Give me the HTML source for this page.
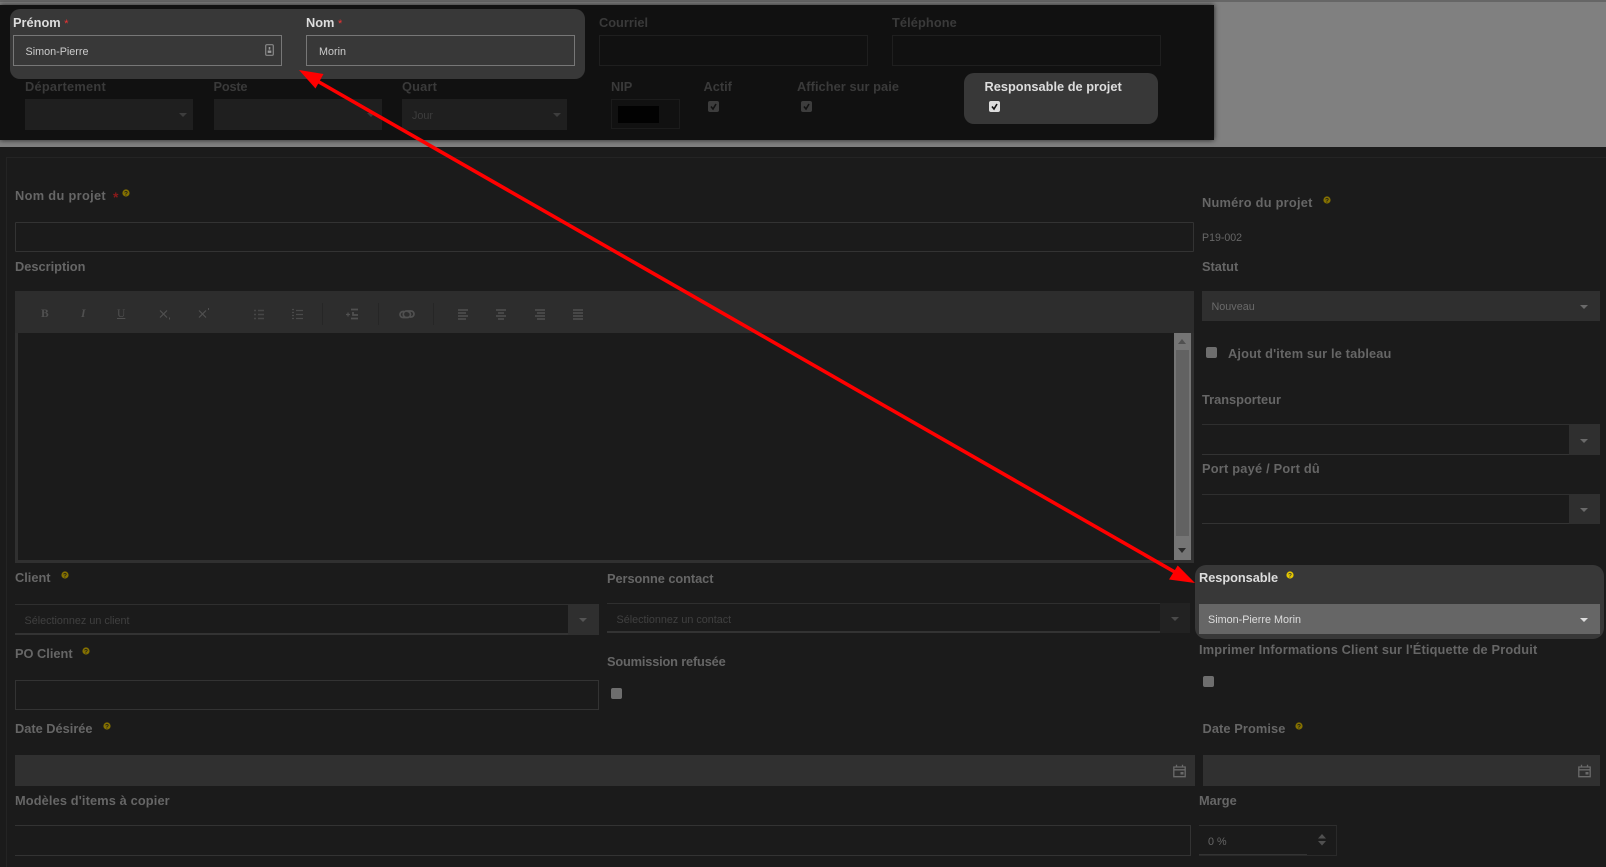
<!DOCTYPE html>
<html lang="fr"><head><meta charset="utf-8"><title>Projet</title>
<style>
html,body{margin:0;padding:0;background:#1b1b1b}
#p{position:relative;width:1606px;height:867px;overflow:hidden;background:#1b1b1b;font-family:"Liberation Sans",sans-serif;filter:blur(.3px)}
#p div,#p span.a{position:absolute;box-sizing:border-box}
.l{font-weight:bold;font-size:12.8px;line-height:16px;color:#666;white-space:nowrap;margin-top:1px}
.z{margin-top:0}
.d{color:#3a3a3a}.w{color:#ddd}
.t{font-size:10.8px;line-height:14px;white-space:nowrap;margin-top:1px}
.b{border:1px solid #333}
.s{background:#2f2f2f}
.c{width:11px;height:11px;border-radius:2px;background:#6e6e6e}
.c svg{position:absolute;left:0;top:0}
svg{position:absolute;overflow:visible}
</style></head><body><div id="p">

<div style="left:0;top:0;width:1606px;height:147px;background:#808080"></div>
<div style="left:0;top:0;width:1606px;height:2px;background:#666"></div>
<div style="left:0;top:5px;width:1214px;height:135px;background:#111;box-shadow:0 0 5px #222"></div>

<div style="left:10px;top:9px;width:575px;height:70px;border-radius:10px;background:#383838"></div>
<div class="l w" style="left:13px;top:14px">Prénom <span style="color:#e33;font-weight:normal;font-size:11px">*</span></div>
<div class="l w" style="left:306px;top:14px">Nom <span style="color:#e33;font-weight:normal;font-size:11px">*</span></div>
<div style="left:13px;top:35px;width:269px;height:31px;border:1px solid #777"></div>
<div style="left:306px;top:35px;width:269px;height:31px;border:1px solid #777"></div>
<div class="t" style="left:25.5px;top:44px;color:#ccc">Simon-Pierre</div>
<div class="t" style="left:319px;top:44px;color:#ccc">Morin</div>
<svg style="left:265px;top:44px" width="9" height="12"><rect x=".7" y=".7" width="7.6" height="10.6" rx="1.2" fill="none" stroke="#888" stroke-width="1.2"/><rect x="3.7" y="3" width="1.6" height="2.6" fill="#999"/><rect x="2.7" y="6.5" width="3.6" height="2.4" fill="#999"/></svg>

<div class="l d" style="left:599px;top:14px">Courriel</div>
<div class="l d" style="left:892px;top:14px;letter-spacing:.1px">Téléphone</div>
<div style="left:599px;top:35px;width:269px;height:31px;border:1px solid #1f1f1f"></div>
<div style="left:892px;top:35px;width:269px;height:31px;border:1px solid #1f1f1f"></div>

<div class="l d" style="left:25px;top:78px;letter-spacing:.25px">Département</div>
<div class="l d" style="left:213.5px;top:78px;letter-spacing:-.2px">Poste</div>
<div class="l d" style="left:402px;top:78px;letter-spacing:.2px">Quart</div>
<div style="left:25px;top:99px;width:168px;height:31px;background:#1f1f1f"></div>
<div style="left:213.5px;top:99px;width:168px;height:31px;background:#1f1f1f"></div>
<div style="left:402px;top:99px;width:164.5px;height:31px;background:#1f1f1f"></div>
<div class="t" style="left:412px;top:108px;color:#3d3d3d">Jour</div>
<svg style="left:179px;top:113px" width="9" height="5"><path d="M0 0h8l-4 4z" fill="#3d3d3d"/></svg>
<svg style="left:367px;top:113px" width="9" height="5"><path d="M0 0h8l-4 4z" fill="#3d3d3d"/></svg>
<svg style="left:553px;top:113px" width="9" height="5"><path d="M0 0h8l-4 4z" fill="#3d3d3d"/></svg>

<div class="l d" style="left:611px;top:78px">NIP</div>
<div style="left:611px;top:99px;width:69px;height:30px;border:1px solid #1c1c1c"></div>
<div style="left:618px;top:106px;width:41px;height:17px;background:#020202"></div>
<div class="l d" style="left:703.5px;top:78px">Actif</div>
<div class="l d" style="left:797px;top:78px;letter-spacing:.06px">Afficher sur paie</div>
<div class="c" style="left:708px;top:101px;background:#3d3d3d"><svg width="11" height="11"><path d="M3 5.5l2 2.5 3-5" fill="none" stroke="#111" stroke-width="1.6"/></svg></div>
<div class="c" style="left:801px;top:101px;background:#3d3d3d"><svg width="11" height="11"><path d="M3 5.5l2 2.5 3-5" fill="none" stroke="#111" stroke-width="1.6"/></svg></div>

<div style="left:964px;top:73px;width:194px;height:51px;border-radius:10px;background:#383838"></div>
<div class="l w" style="left:984.5px;top:78px">Responsable de projet</div>
<div class="c" style="left:989px;top:101px;background:#ddd"><svg width="11" height="11"><path d="M3 5.5l2 2.5 3-5" fill="none" stroke="#111" stroke-width="1.6"/></svg></div>

<div style="left:6px;top:157px;width:1600px;height:710px;border:1px solid #242424;border-right:0;border-bottom:0"></div>

<div class="l" style="left:15px;top:187px;letter-spacing:.33px">Nom du projet</div>
<div style="left:113px;top:190px;color:#8a1a1a;font-size:14px;line-height:14px;font-weight:bold">*</div>
<svg style="left:121.5px;top:189px" width="8" height="8"><circle cx="4" cy="4" r="3.6" fill="#857100"/><text x="4" y="6.4" font-size="6.5" font-weight="bold" text-anchor="middle" fill="#1b1b1b" font-family="Liberation Sans">?</text></svg>
<div class="b" style="left:15px;top:222px;width:1179px;height:30px;border-radius:1px"></div>

<div class="l z" style="left:15px;top:259px">Description</div>

<div class="l" style="left:1202px;top:194px;letter-spacing:.25px">Numéro du projet</div>
<svg style="left:1323px;top:196px" width="8" height="8"><circle cx="4" cy="4" r="3.6" fill="#857100"/><text x="4" y="6.4" font-size="6.5" font-weight="bold" text-anchor="middle" fill="#1b1b1b" font-family="Liberation Sans">?</text></svg>
<div class="t" style="left:1202px;top:230px;color:#666;font-size:10.6px">P19-002</div>
<div class="l z" style="left:1202px;top:259px">Statut</div>

<!-- editor -->
<div style="left:15px;top:291px;width:1179px;height:42px;background:#2d2d2d"></div>
<div style="left:15px;top:333px;width:3px;height:230px;background:#303030"></div>
<div style="left:15px;top:560px;width:1179px;height:3px;background:#303030"></div>
<div style="left:1191px;top:333px;width:3px;height:230px;background:#303030"></div>
<div style="left:1174px;top:333px;width:17px;height:227px;background:#757575"></div>
<div style="left:1176px;top:350px;width:13px;height:186px;background:#626262"></div>
<svg style="left:1178px;top:339px" width="10" height="6"><path d="M0 5h8L4 0z" fill="#505050"/></svg>
<svg style="left:1178px;top:548px" width="10" height="6"><path d="M0 0h8L4 5z" fill="#2a2a2a"/></svg>

<!-- toolbar icons -->
<div style="left:41px;top:307px;font:bold 11.5px/14px 'Liberation Serif',serif;color:#505050">B</div>
<div style="left:81px;top:307px;font:italic bold 11.5px/14px 'Liberation Serif',serif;color:#505050">I</div>
<div style="left:117px;top:307px;font:11.5px/14px 'Liberation Serif',serif;color:#505050;text-decoration:underline">U</div>
<svg style="left:0;top:0" width="1606" height="867" stroke="#505050" fill="none">
<path d="M160 310.500l7 7m0-7l-7 7" stroke-width="1.200"/><path d="M169.500 317.500v2" stroke-width="1"/>
<path d="M199 310.500l7 7m0-7l-7 7" stroke-width="1.200"/><path d="M208.500 308v2" stroke-width="1"/>
<path d="M254 310.500h2m2 0h6M254 314.500h2m2 0h6M254 318.500h2m2 0h6" stroke="#464646" stroke-width="1.400"/>
<path d="M292 309.500h2m-2 3h2m-2 3h2m-2 3h2M296 310.500h7M296 314.500h7M296 318.500h7" stroke="#4a4a4a" stroke-width="1.200"/>
<path d="M322.500 303v22M378.500 303v22M433.500 303v22" stroke="#262626"/>
<path d="M346 314.500h4m-2-2v4" stroke-width="1.200"/><path d="M351 309.500h7M353 312v3h5M351 318.500h7" stroke-width="1.800"/>
<path d="M404 317.500h3.500a3 3 0 0 0 0-6M410 311h-3.500a3 3 0 0 0 0 6.500M410 311h1a3 3 0 0 1 0 6h-1M404 317.500h-1a3 3 0 0 1 0-6h1" stroke-width="1.700"/>
<path d="M458 310h10M458 313h8M458 316h10M458 319h8" stroke-width="1.600"/>
<path d="M496 310h10M498 313h6M496 316h10M498 319h6" stroke-width="1.600"/>
<path d="M535 310h10M537 313h8M535 316h10M537 319h8" stroke-width="1.600"/>
<path d="M573 310h10M573 313h10M573 316h10M573 319h10" stroke-width="1.600"/>
</svg>

<!-- Statut -->
<div class="s" style="left:1202px;top:291px;width:398px;height:30px"></div>
<div class="t" style="left:1211.500px;top:299px;color:#6a6a6a">Nouveau</div>
<svg style="left:1580px;top:305px" width="9" height="5"><path d="M0 0h8l-4 4z" fill="#6a6a6a"/></svg>
<div class="c" style="left:1206px;top:347px"></div>
<div class="l" style="left:1228px;top:345px;letter-spacing:.15px">Ajout d'item sur le tableau</div>

<div class="l" style="left:1202px;top:391px">Transporteur</div>
<div style="left:1202px;top:424px;width:398px;height:31px;border-top:1px solid #2f2f2f;border-bottom:1px solid #333"></div>
<div class="s" style="left:1569px;top:424px;width:31px;height:31px"></div>
<svg style="left:1580px;top:439px" width="9" height="5"><path d="M0 0h8l-4 4z" fill="#6a6a6a"/></svg>
<div class="l z" style="left:1202px;top:461px;letter-spacing:.22px">Port payé / Port dû</div>
<div style="left:1202px;top:494px;width:398px;height:30px;border-top:1px solid #2f2f2f;border-bottom:1px solid #333"></div>
<div class="s" style="left:1569px;top:494px;width:31px;height:30px"></div>
<svg style="left:1580px;top:508px" width="9" height="5"><path d="M0 0h8l-4 4z" fill="#6a6a6a"/></svg>

<!-- Responsable -->
<div style="left:1195px;top:565px;width:409px;height:74px;border-radius:11px;background:#383838"></div>
<div class="l w" style="left:1199px;top:569px;letter-spacing:-.05px">Responsable</div>
<svg style="left:1286px;top:571px" width="8" height="8"><circle cx="4" cy="4" r="3.6" fill="#e6c800"/><text x="4" y="6.4" font-size="6.5" font-weight="bold" text-anchor="middle" fill="#383838" font-family="Liberation Sans">?</text></svg>
<div style="left:1199px;top:604px;width:401px;height:30px;background:#666"></div>
<div class="t" style="left:1208px;top:612px;color:#ddd">Simon-Pierre Morin</div>
<svg style="left:1580px;top:618px" width="9" height="5"><path d="M0 0h8l-4 4z" fill="#ddd"/></svg>
<div class="l" style="left:1199px;top:641px;letter-spacing:.15px">Imprimer Informations Client sur l'Étiquette de Produit</div>
<div class="c" style="left:1203px;top:676px"></div>

<!-- Client -->
<div class="l" style="left:15px;top:569px">Client</div>
<svg style="left:60.500px;top:571px" width="8" height="8"><circle cx="4" cy="4" r="3.600" fill="#857100"/><text x="4" y="6.400" font-size="6.500" font-weight="bold" text-anchor="middle" fill="#1b1b1b" font-family="Liberation Sans">?</text></svg>
<div style="left:15px;top:604px;width:584px;height:31px;border-top:1px solid #2f2f2f;border-bottom:2px solid #333"></div>
<div class="s" style="left:568px;top:604px;width:31px;height:31px"></div>
<div class="t" style="left:24.500px;top:613px;color:#404040">Sélectionnez un client</div>
<svg style="left:579px;top:618px" width="9" height="5"><path d="M0 0h8l-4 4z" fill="#555"/></svg>

<div class="l" style="left:607px;top:570px;letter-spacing:-.06px">Personne contact</div>
<div style="left:607px;top:603px;width:583px;height:30px;border-top:1px solid #2f2f2f;border-bottom:2px solid #333"></div>
<div style="left:1160px;top:603px;width:30px;height:30px;background:#222"></div>
<div class="t" style="left:616.500px;top:612px;color:#404040">Sélectionnez un contact</div>
<svg style="left:1171px;top:617px" width="9" height="5"><path d="M0 0h8l-4 4z" fill="#4a4a4a"/></svg>

<div class="l" style="left:15px;top:645px">PO Client</div>
<svg style="left:82px;top:647px" width="8" height="8"><circle cx="4" cy="4" r="3.600" fill="#857100"/><text x="4" y="6.400" font-size="6.500" font-weight="bold" text-anchor="middle" fill="#1b1b1b" font-family="Liberation Sans">?</text></svg>
<div class="b" style="left:15px;top:680px;width:584px;height:30px"></div>
<div class="l" style="left:607px;top:653px;letter-spacing:-.17px">Soumission refusée</div>
<div class="c" style="left:611px;top:688px;height:10.500px;width:10.500px"></div>

<div class="l" style="left:15px;top:720px">Date Désirée</div>
<svg style="left:102.500px;top:722px" width="8" height="8"><circle cx="4" cy="4" r="3.600" fill="#857100"/><text x="4" y="6.400" font-size="6.500" font-weight="bold" text-anchor="middle" fill="#1b1b1b" font-family="Liberation Sans">?</text></svg>
<div style="left:15px;top:755px;width:1180px;height:31px;background:#303030"></div>
<svg style="left:1172.500px;top:764px" width="13" height="14"><path d="M.8 3h11.400v9.700H.8zM.8 5.800h11.400M3.500.8v2.500M9.500.8v2.500" fill="none" stroke="#6a6a6a" stroke-width="1.300"/><rect x="7.500" y="8" width="3" height="2.500" fill="#6a6a6a"/></svg>

<div class="l" style="left:1202.500px;top:720px;letter-spacing:.1px">Date Promise</div>
<svg style="left:1295px;top:722px" width="8" height="8"><circle cx="4" cy="4" r="3.600" fill="#857100"/><text x="4" y="6.400" font-size="6.500" font-weight="bold" text-anchor="middle" fill="#1b1b1b" font-family="Liberation Sans">?</text></svg>
<div style="left:1203px;top:755px;width:397px;height:31px;background:#303030"></div>
<svg style="left:1577.500px;top:764px" width="13" height="14"><path d="M.8 3h11.400v9.700H.8zM.8 5.800h11.400M3.500.8v2.500M9.500.8v2.500" fill="none" stroke="#6a6a6a" stroke-width="1.300"/><rect x="7.500" y="8" width="3" height="2.500" fill="#6a6a6a"/></svg>

<div class="l z" style="left:15px;top:793px;letter-spacing:.13px">Modèles d'items à copier</div>
<div class="b" style="left:15px;top:825px;width:1175.500px;height:31px;border-left:0"></div>
<div class="l z" style="left:1199px;top:793px">Marge</div>
<div style="left:1199px;top:825px;width:138px;height:31px;border-top:1px solid #2e2e2e;border-right:1px solid #2a2a2a;border-bottom:1px solid #2a2a2a"></div>
<div style="left:1199px;top:854px;width:108px;height:1px;background:#333"></div>
<div class="t" style="left:1208px;top:834px;color:#666">0 %</div>
<svg style="left:1317px;top:833px" width="10" height="14"><path d="M1 5.500h8L5 1zM1 8h8l-4 4.500z" fill="#505050"/></svg>

<!-- arrow -->
<svg style="left:0;top:0" width="1606" height="867">
<path d="M312 78L1180 575" stroke="#f00" stroke-width="3.600" fill="none"/>
<path d="M299 70L323.500 74L315.500 88.500z" fill="#f00"/>
<path d="M1195 583L1169 579.500L1177.700 565.500z" fill="#f00"/>
</svg>
</div></body></html>
